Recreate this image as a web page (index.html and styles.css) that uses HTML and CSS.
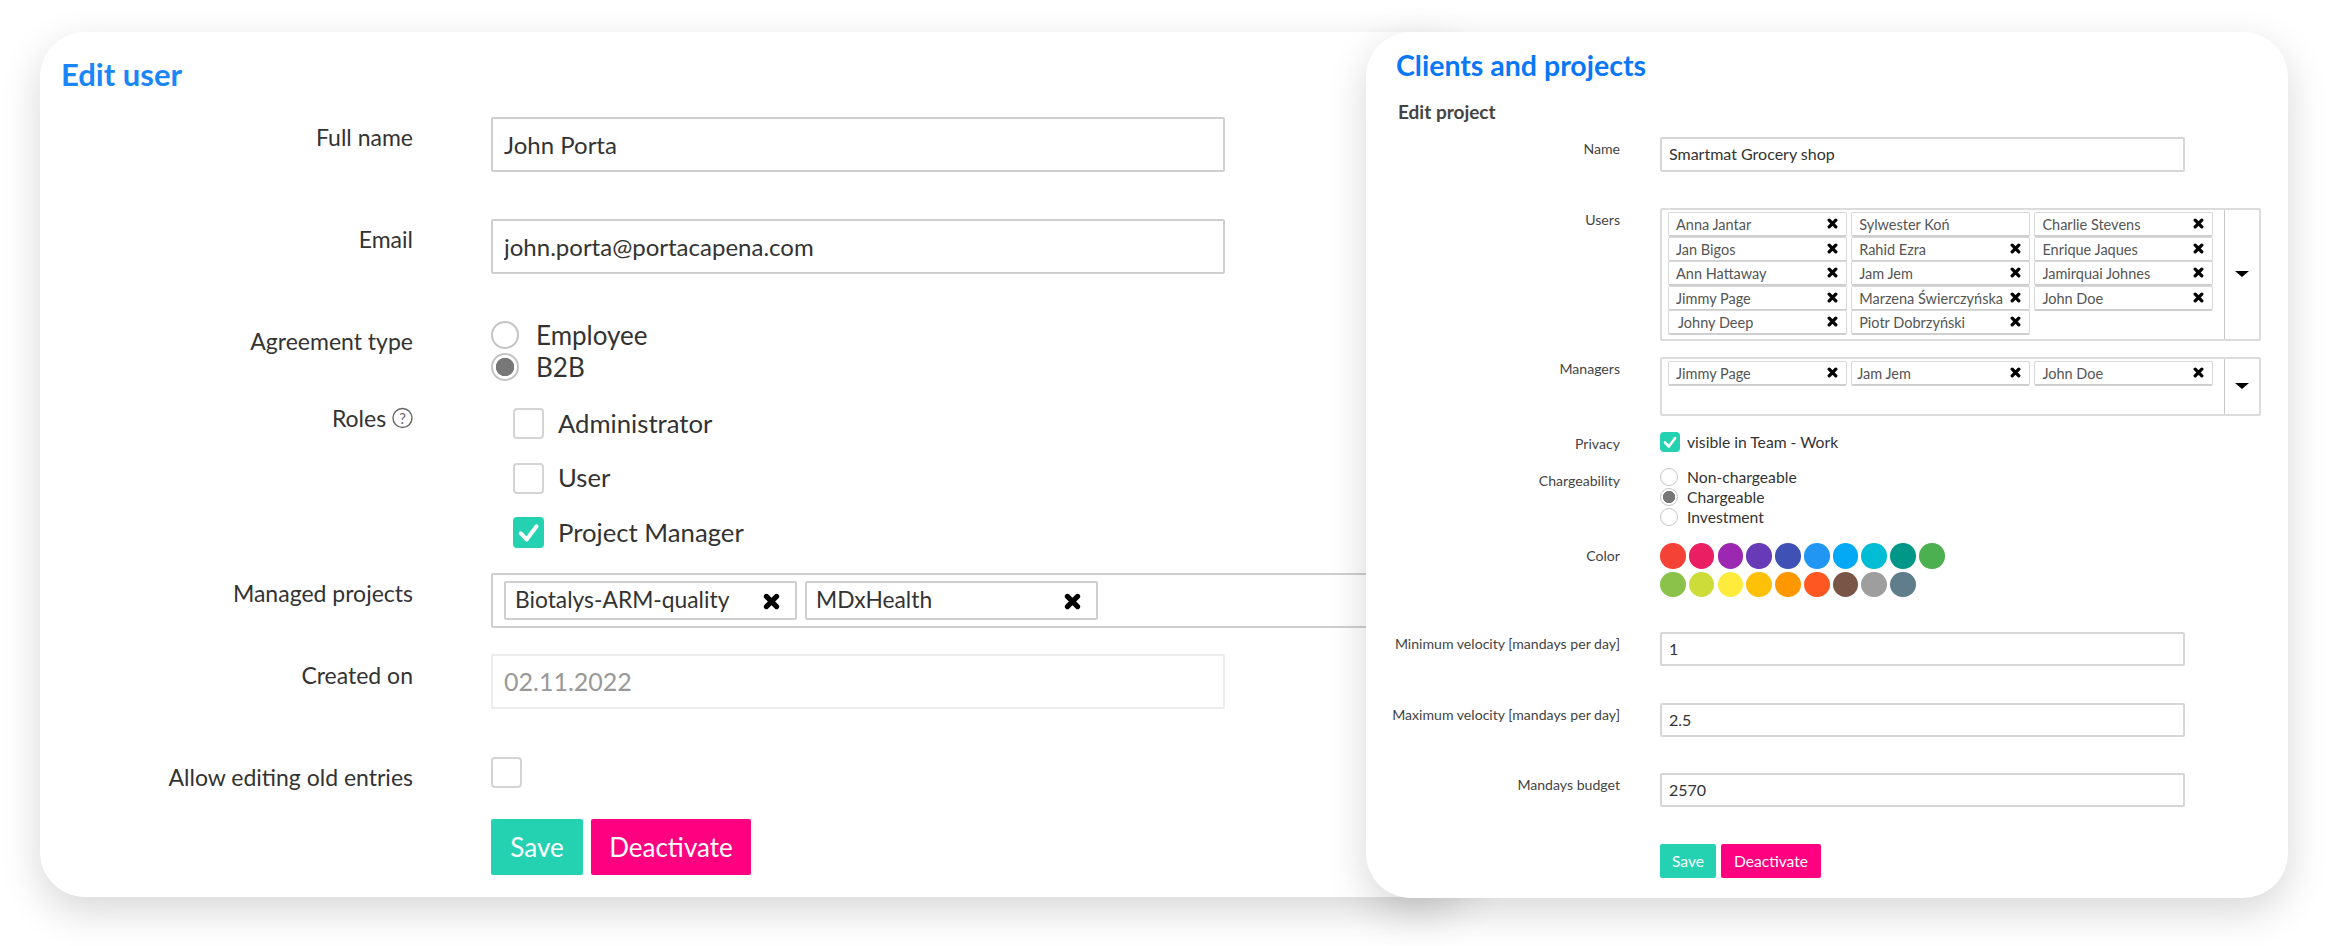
FILE: index.html
```html
<!DOCTYPE html>
<html lang="en">
<head>
  <meta charset="UTF-8">
  <meta name="viewport" content="width=device-width, initial-scale=1.0">
  <title>Edit user / Edit project</title>
  <link rel="stylesheet" href="styles.css">
</head>
<body>
  <svg class="icon-defs" aria-hidden="true">
    <symbol id="times" viewBox="0 0 12 12">
      <path d="M2.4 2.4 L9.6 9.6 M9.6 2.4 L2.4 9.6" fill="none" stroke="#000" stroke-width="3.6" stroke-linecap="round"/>
    </symbol>
    <symbol id="tick" viewBox="0 0 20 20">
      <path d="M5 10.5 L8.8 14.5 L15.2 6" fill="none" stroke="#fff" stroke-width="2.6" stroke-linecap="round" stroke-linejoin="round"/>
    </symbol>
  </svg>

  <div class="card user-card">
    <h1 class="card-title">Edit user</h1>
    <form class="user-form">
      <div class="form-row">
        <label>Full name</label>
        <input class="text-input" type="text" value="John Porta">
      </div>
      <div class="form-row row-email">
        <label>Email</label>
        <input class="text-input" type="text" value="john.porta@portacapena.com">
      </div>
      <div class="form-row row-agreement">
        <label>Agreement type</label>
        <div>
          <div class="radio-line"><span class="radio"></span>Employee</div>
          <div class="radio-line"><span class="radio radio-on"></span>B2B</div>
        </div>
      </div>
      <div class="form-row row-roles">
        <label>Roles <svg class="help-icon" width="21" height="22" viewBox="0 0 21 22"><circle cx="10.5" cy="11" r="9.5" fill="none" stroke="#666" stroke-width="1.4"/><text x="10.5" y="16.5" text-anchor="middle" font-size="15" fill="#666">?</text></svg></label>
        <div class="role-list">
          <div class="check-line"><span class="checkbox"></span>Administrator</div>
          <div class="check-line"><span class="checkbox"></span>User</div>
          <div class="check-line"><span class="checkbox checkbox-on"><svg width="31" height="31"><use href="#tick"/></svg></span>Project Manager</div>
        </div>
      </div>
      <div class="form-row row-managed">
        <label>Managed projects</label>
        <div class="project-select">
          <div class="project-tag">Biotalys-ARM-quality<svg class="tag-x" width="17" height="17"><use href="#times"/></svg></div>
          <div class="project-tag">MDxHealth<svg class="tag-x" width="17" height="17"><use href="#times"/></svg></div>
        </div>
      </div>
      <div class="form-row row-created">
        <label>Created on</label>
        <input class="text-input input-disabled" type="text" value="02.11.2022" disabled>
      </div>
      <div class="form-row row-allow">
        <label>Allow editing old entries</label>
        <div><span class="checkbox"></span></div>
      </div>
      <div class="form-row row-buttons">
        <span></span>
        <div class="button-row">
          <button type="button" class="btn btn-save">Save</button>
          <button type="button" class="btn btn-deactivate">Deactivate</button>
        </div>
      </div>
    </form>
  </div>

  <div class="card project-card">
    <h1 class="card-title">Clients and projects</h1>
    <h3 class="card-subtitle">Edit project</h3>
    <form class="project-form">
      <div class="form-row">
        <label>Name</label>
        <input class="text-input input-name" type="text" value="Smartmat Grocery shop">
      </div>
      <div class="form-row row-users">
        <label>Users</label>
        <div class="multi-select">
          <div class="tag-grid">
            <div class="tag">Anna Jantar<svg width="11" height="11"><use href="#times"/></svg></div>
            <div class="tag">Sylwester Koń</div>
            <div class="tag">Charlie Stevens<svg width="11" height="11"><use href="#times"/></svg></div>
            <div class="tag">Jan Bigos<svg width="11" height="11"><use href="#times"/></svg></div>
            <div class="tag">Rahid Ezra<svg width="11" height="11"><use href="#times"/></svg></div>
            <div class="tag">Enrique Jaques<svg width="11" height="11"><use href="#times"/></svg></div>
            <div class="tag">Ann Hattaway<svg width="11" height="11"><use href="#times"/></svg></div>
            <div class="tag">Jam Jem<svg width="11" height="11"><use href="#times"/></svg></div>
            <div class="tag">Jamirquai Johnes<svg width="11" height="11"><use href="#times"/></svg></div>
            <div class="tag">Jimmy Page<svg width="11" height="11"><use href="#times"/></svg></div>
            <div class="tag">Marzena Świerczyńska<svg width="11" height="11"><use href="#times"/></svg></div>
            <div class="tag">John Doe<svg width="11" height="11"><use href="#times"/></svg></div>
            <div class="tag tag-inset">Johny Deep<svg width="11" height="11"><use href="#times"/></svg></div>
            <div class="tag">Piotr Dobrzyński<svg width="11" height="11"><use href="#times"/></svg></div>
          </div>
          <div class="select-arrow"><span class="caret"></span></div>
        </div>
      </div>
      <div class="form-row row-managers">
        <label>Managers</label>
        <div class="multi-select">
          <div class="tag-grid">
            <div class="tag">Jimmy Page<svg width="11" height="11"><use href="#times"/></svg></div>
            <div class="tag tag-outset">Jam Jem<svg width="11" height="11"><use href="#times"/></svg></div>
            <div class="tag">John Doe<svg width="11" height="11"><use href="#times"/></svg></div>
          </div>
          <div class="select-arrow"><span class="caret"></span></div>
        </div>
      </div>
      <div class="form-row row-privacy">
        <label>Privacy</label>
        <div class="check-line"><span class="checkbox checkbox-on"><svg width="20" height="20"><use href="#tick"/></svg></span>visible in Team - Work</div>
      </div>
      <div class="form-row row-charge">
        <label>Chargeability</label>
        <div>
          <div class="radio-line"><span class="radio"></span>Non-chargeable</div>
          <div class="radio-line"><span class="radio radio-on"></span>Chargeable</div>
          <div class="radio-line"><span class="radio"></span>Investment</div>
        </div>
      </div>
      <div class="form-row row-color">
        <label>Color</label>
        <div class="swatches">
          <span class="swatch c-red"></span>
          <span class="swatch c-pink"></span>
          <span class="swatch c-purple"></span>
          <span class="swatch c-deep-purple"></span>
          <span class="swatch c-indigo"></span>
          <span class="swatch c-blue"></span>
          <span class="swatch c-light-blue"></span>
          <span class="swatch c-cyan"></span>
          <span class="swatch c-teal"></span>
          <span class="swatch c-green"></span>
          <span class="swatch c-light-green"></span>
          <span class="swatch c-lime"></span>
          <span class="swatch c-yellow"></span>
          <span class="swatch c-amber"></span>
          <span class="swatch c-orange"></span>
          <span class="swatch c-deep-orange"></span>
          <span class="swatch c-brown"></span>
          <span class="swatch c-grey"></span>
          <span class="swatch c-blue-grey"></span>
        </div>
      </div>
      <div class="form-row row-min">
        <label>Minimum velocity [mandays per day]</label>
        <input class="text-input" type="text" value="1">
      </div>
      <div class="form-row row-max">
        <label>Maximum velocity [mandays per day]</label>
        <input class="text-input" type="text" value="2.5">
      </div>
      <div class="form-row row-budget">
        <label>Mandays budget</label>
        <input class="text-input" type="text" value="2570">
      </div>
      <div class="form-row row-actions">
        <span></span>
        <div class="button-row">
          <button type="button" class="btn btn-save">Save</button>
          <button type="button" class="btn btn-deactivate">Deactivate</button>
        </div>
      </div>
    </form>
  </div>
</body>
</html>
```

FILE: styles.css
```css
body {
  font-family: Lato, "Open Sans", sans-serif;
  background-color: #fff;
  color: #333;
  margin: 0;
  height: 946px;
  overflow: hidden;
  position: relative;
}

.icon-defs {
  display: none;
}

.card {
  background-color: #fff;
  border-radius: 45px;
  box-shadow: 0 14px 42px rgba(0, 0, 0, 0.16);
  box-sizing: border-box;
}

.card-title {
  color: #1a86f8;
  font-weight: 700;
  margin: 0;
}

.form-row {
  display: grid;
}

.form-row label {
  text-align: right;
}

.text-input {
  font-family: inherit;
  color: #333;
  background-color: #fff;
  box-sizing: border-box;
  border: 2px solid #cfcfcf;
  border-radius: 2px;
  width: 100%;
  outline: none;
}

.input-disabled {
  border-color: #ececec;
  color: #999;
}

.radio,
.checkbox {
  display: inline-block;
  box-sizing: border-box;
  flex: none;
  background-color: #fff;
}

.radio {
  border-radius: 50%;
  border: 2px solid #c4c4c4;
}

.radio-on {
  background: radial-gradient(circle, #777 52%, #fff 56%);
}

.checkbox {
  border: 2px solid #d4d4d4;
  border-radius: 4px;
}

.checkbox-on {
  background-color: #24d2b2;
  border: none;
}

.checkbox svg {
  display: block;
}

.radio-line,
.check-line {
  display: flex;
  align-items: center;
}

.button-row {
  display: flex;
}

.btn {
  font-family: inherit;
  color: #fff;
  border: none;
  border-radius: 2px;
  cursor: pointer;
  padding: 0;
}

.btn-save {
  background-color: #24d2b2;
}

.btn-deactivate {
  background-color: #ff0080;
}

/* left card */
.user-card {
  position: absolute;
  left: 40px;
  top: 32px;
  width: 1430px;
  height: 865px;
  padding: 24px 0 0 21px;
}

.user-card .card-title {
  font-size: 31px;
  line-height: 36px;
}

.user-form {
  margin-top: 25px;
  margin-left: -21px;
  font-size: 23px;
  line-height: 32px;
}

.user-form .form-row {
  grid-template-columns: 373px 1fr;
  column-gap: 78px;
}

.user-form label {
  padding-top: 4px;
}

.user-form .text-input {
  width: 734px;
  height: 55px;
  padding: 0 11px;
  font-size: 24px;
}

.row-email {
  margin-top: 47px;
}

.row-agreement {
  margin-top: 45px;
}

.user-form .row-agreement label {
  padding-top: 6px;
}

.user-form .radio-line {
  height: 32px;
  font-size: 26px;
}

.user-form .radio {
  width: 28px;
  height: 28px;
  margin-right: 17px;
}

.row-roles {
  margin-top: 19px;
}

.user-form .row-roles label {
  padding-top: 0;
}

.help-icon {
  vertical-align: -2px;
}

.role-list {
  padding: 6px 0 0 22px;
  display: flex;
  flex-direction: column;
  gap: 23.5px;
}

.user-form .checkbox {
  width: 31px;
  height: 31px;
}

.role-list .check-line {
  height: 31px;
  font-size: 25.7px;
  padding-bottom: 2px;
  box-sizing: border-box;
}

.role-list .checkbox {
  margin-right: 14px;
  margin-bottom: -2px;
}

.row-managed {
  margin-top: 25px;
}

.user-form .row-managed label {
  padding-top: 4px;
}

.project-select {
  box-sizing: border-box;
  width: 950px;
  height: 55px;
  border: 2px solid #cfcfcf;
  border-radius: 2px;
  padding: 6px 11px;
  display: flex;
  gap: 8px;
}

.project-tag {
  box-sizing: border-box;
  width: 293px;
  height: 39px;
  border: 2px solid #cfcfcf;
  border-radius: 2px;
  padding: 0 15px 3px 9px;
  display: flex;
  align-items: center;
  justify-content: space-between;
  font-size: 22.8px;
}

.tag-x {
  margin-top: 4px;
}

.row-created {
  margin-top: 26px;
}

.user-form .row-created label {
  padding-top: 5px;
}

.user-form .input-disabled {
  font-size: 25px;
  padding-bottom: 2px;
}

.row-allow {
  margin-top: 48px;
}

.user-form .row-allow label {
  padding-top: 4px;
}

.row-allow .checkbox {
  display: block;
}

.row-buttons {
  margin-top: 26px;
}

.user-form .button-row {
  gap: 8px;
}

.user-form .btn {
  height: 56px;
  font-size: 26px;
}

.user-form .btn-save {
  width: 92px;
}

.user-form .btn-deactivate {
  width: 160px;
}

/* right card */
.project-card {
  position: absolute;
  left: 1366px;
  top: 32px;
  width: 922px;
  height: 866px;
  padding: 15px 0 0 30px;
}

.project-card .card-title {
  color: #0a78f6;
  font-size: 28.5px;
  line-height: 36px;
}

.card-subtitle {
  margin: 18px 0 0 2px;
  font-size: 19px;
  line-height: 22px;
  font-weight: 700;
  color: #444;
}

.project-form {
  margin: 14px 0 0 -30px;
  font-size: 14.1px;
  line-height: 20px;
}

.project-form .form-row {
  grid-template-columns: 254px 1fr;
  column-gap: 40px;
}

.project-form label {
  color: #444;
  padding-top: 2px;
}

.project-form .text-input {
  width: 525px;
  height: 34px;
  padding: 0 7px 2px;
  font-size: 16px;
  border-color: #d6d6d6;
}

.project-form .input-name {
  height: 35px;
}

.row-users {
  margin-top: 36px;
}

.row-managers,
.row-privacy {
  margin-top: 16px;
}

.multi-select {
  box-sizing: border-box;
  width: 601px;
  border: 2px solid #dcdcdc;
  border-radius: 2px;
  display: flex;
  justify-content: space-between;
}

.tag-grid {
  display: grid;
  grid-template-columns: repeat(3, 178.6px);
  grid-auto-rows: 24.6px;
  column-gap: 4.6px;
  padding: 2px 0 4px 6px;
}

.row-managers .tag-grid {
  padding-bottom: 28px;
}

.tag {
  box-sizing: border-box;
  height: 25px;
  border: 1px solid #d8d8d8;
  border-bottom: 2px solid #cfcfcf;
  border-radius: 2px;
  padding: 2px 8px 0 7px;
  display: flex;
  align-items: center;
  justify-content: space-between;
  color: #555;
  font-size: 14.5px;
}

.tag-inset {
  padding-left: 9px;
}

.tag-outset {
  padding-left: 5px;
}

.tag svg {
  margin-top: -3px;
}

.select-arrow {
  width: 34px;
  border-left: 1px solid #c8c8c8;
  display: flex;
  align-items: center;
  justify-content: center;
}

.caret {
  width: 0;
  height: 0;
  border-left: 7px solid transparent;
  border-right: 7px solid transparent;
  border-top: 6px solid #000;
}

.project-form .row-privacy label {
  padding-top: 2px;
}

.project-form .check-line {
  height: 20px;
  font-size: 15.7px;
  align-items: flex-start;
  line-height: 20px;
}

.project-form .checkbox {
  width: 20px;
  height: 20px;
  margin-right: 7px;
}

.row-charge {
  margin-top: 14px;
}

.project-form .row-charge label {
  padding-top: 3px;
}

.project-form .radio-line {
  height: 19.8px;
  font-size: 15.7px;
}

.project-form .radio {
  width: 18px;
  height: 18px;
  border-width: 1px;
  margin-right: 9px;
}

.row-color {
  margin-top: 16px;
}

.project-form .row-color label {
  padding-top: 3px;
}

.swatches {
  display: grid;
  grid-template-columns: repeat(10, 25.6px);
  grid-auto-rows: 25.6px;
  gap: 3.2px;
}

.swatch {
  border-radius: 50%;
}

.c-red { background-color: #f44336; }
.c-pink { background-color: #e91e63; }
.c-purple { background-color: #9c27b0; }
.c-deep-purple { background-color: #673ab7; }
.c-indigo { background-color: #3f51b5; }
.c-blue { background-color: #2196f3; }
.c-light-blue { background-color: #03a9f4; }
.c-cyan { background-color: #00bcd4; }
.c-teal { background-color: #009688; }
.c-green { background-color: #4caf50; }
.c-light-green { background-color: #8bc34a; }
.c-lime { background-color: #cddc39; }
.c-yellow { background-color: #ffeb3b; }
.c-amber { background-color: #ffc107; }
.c-orange { background-color: #ff9800; }
.c-deep-orange { background-color: #ff5722; }
.c-brown { background-color: #795548; }
.c-grey { background-color: #9e9e9e; }
.c-blue-grey { background-color: #607d8b; }

.row-min {
  margin-top: 35px;
}

.row-max,
.row-actions {
  margin-top: 37px;
}

.row-budget {
  margin-top: 36px;
}

.project-form .row-min label,
.project-form .row-max label,
.project-form .row-budget label {
  padding-top: 2px;
}

.project-form .button-row {
  gap: 5px;
}

.project-form .btn {
  height: 34px;
  font-size: 15.6px;
}

.project-form .btn-save {
  width: 56px;
}

.project-form .btn-deactivate {
  width: 100px;
}
```
